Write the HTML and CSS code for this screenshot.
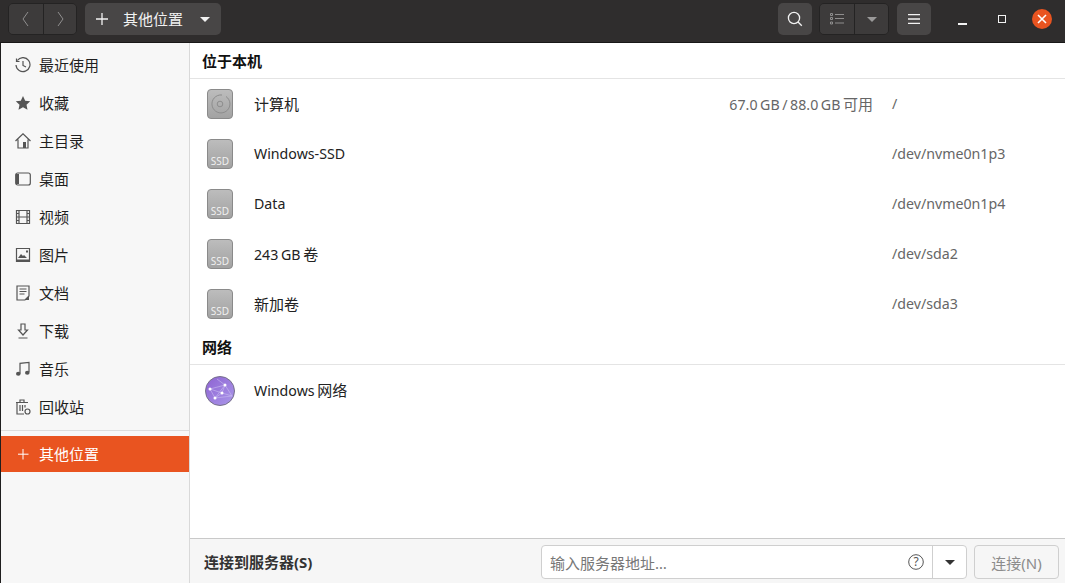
FILE: index.html
```html
<!DOCTYPE html>
<html lang="zh-CN">
<head>
	<meta charset="UTF-8">
	<title>其他位置</title>
	<link rel="stylesheet" href="styles.css">
</head>
<body>
	<header class="topbar">
		<div class="btn-group nav-group">
			<button class="tool-btn nav-btn"><svg width="12" height="18" viewBox="0 0 12 18"><path d="M8 2 3 9l5 7" class="dim-line"/></svg></button>
			<button class="tool-btn nav-btn"><svg width="12" height="18" viewBox="0 0 12 18"><path d="M4 2l5 7-5 7" class="dim-line"/></svg></button>
		</div>
		<button class="path-btn">
			<svg width="12" height="12" viewBox="0 0 12 12"><path d="M6 0v12M0 6h12" class="light-line"/></svg>
			<span class="path-label">其他位置</span>
			<span class="caret caret-light"></span>
		</button>
		<div class="spacer"></div>
		<button class="solo-btn search-btn"><svg width="16" height="16" viewBox="0 0 16 16"><circle cx="7" cy="7" r="5.6" class="light-line"/><path d="M11 11l3.8 3.8" class="light-line"/></svg></button>
		<div class="btn-group view-group">
			<button class="tool-btn view-btn"><svg width="14" height="12" viewBox="0 0 14 12"><path d="M.5.5h2v2h-2zM.5 4.5h2v2h-2zM.5 9h2v2h-2zM5 1.5h9M5 5.5h9M5 10h9" class="dim-line"/></svg></button>
			<button class="tool-btn view-btn"><span class="caret caret-dim"></span></button>
		</div>
		<button class="solo-btn menu-btn"><svg width="12" height="10" viewBox="0 0 12 10"><path d="M0 .5h12M0 5h12M0 9.500h12" class="light-line"/></svg></button>
		<div class="win-controls">
			<span class="win-btn"><i class="win-min"></i></span>
			<span class="win-btn"><i class="win-max"></i></span>
			<span class="win-btn win-close"><svg width="10" height="10" viewBox="0 0 10 10"><path d="M1 1l8 8M9 1 1 9" stroke="#fff" stroke-width="1.6"/></svg></span>
		</div>
	</header>

	<div class="content">
		<nav class="sidebar">
			<ul class="places">
				<li class="place"><svg class="place-icon" viewBox="0 0 16 16"><path d="M2.300 3.500A7 7 0 1 1 1 8M1.500 1.500v3h3M8 4v4.500l3 1.500" class="icon-line"/></svg><span class="place-label">最近使用</span></li>
				<li class="place"><svg class="place-icon" viewBox="0 0 16 16"><path d="M8 1l2.200 4.700 5 .6-3.700 3.400 1 5L8 12.200 3.500 14.700l1-5L.8 6.300l5-.6z" class="icon-fill"/></svg><span class="place-label">收藏</span></li>
				<li class="place"><svg class="place-icon" viewBox="0 0 16 16"><path d="M.5 8 8 .8 15.500 8M3 6.500v8.500h10V6.500" class="icon-line"/><path d="M8 9h3v6H8z" class="icon-fill"/></svg><span class="place-label">主目录</span></li>
				<li class="place"><svg class="place-icon" viewBox="0 0 16 16"><rect x=".7" y="2" width="14.600" height="12" rx="2" class="icon-line"/><path d="M1 3h3v10H1z" class="icon-fill"/></svg><span class="place-label">桌面</span></li>
				<li class="place"><svg class="place-icon" viewBox="0 0 16 16"><path d="M1.500 1.500h13v13h-13zM4 1.500v13M12 1.500v13M4 8h8M1.500 4.500H4M1.500 8H4M1.500 11.500H4M12 4.500h2.500M12 8h2.500M12 11.500h2.500" class="icon-line"/></svg><span class="place-label">视频</span></li>
				<li class="place"><svg class="place-icon" viewBox="0 0 16 16"><path d="M1.500 1.500h13v13h-13z" class="icon-line"/><path d="M3 11l3-4 2 2 1-1 3 3zM11 3.500h2v2h-2zM1 12.500h14V15H1z" class="icon-fill"/></svg><span class="place-label">图片</span></li>
				<li class="place"><svg class="place-icon" viewBox="0 0 16 16"><path d="M2 1h12v10l-4 4H2zM4.500 4h7M4.500 6.500h7M4.500 9h5" class="icon-line"/><path d="M14 11v4h-4z" class="icon-fill"/></svg><span class="place-label">文档</span></li>
				<li class="place"><svg class="place-icon" viewBox="0 0 16 16"><path d="M6 1h4v6h2.500L8 12 3.500 7H6zM3.500 15h9" class="icon-line"/></svg><span class="place-label">下载</span></li>
				<li class="place"><svg class="place-icon" viewBox="0 0 16 16"><path d="M5 12.500V2.300l9-1V11" class="icon-line" stroke-width="1.600"/><ellipse cx="3.300" cy="12.800" rx="2.300" ry="2" class="icon-fill"/><ellipse cx="12.300" cy="11.800" rx="2.300" ry="2" class="icon-fill"/></svg><span class="place-label">音乐</span></li>
				<li class="place"><svg class="place-icon" viewBox="0 0 16 16"><path d="M1 3.500h12M5 3V1h4v2M2 3.500V15h7M5 6v6M7.500 6v6M10 6v2.500" class="icon-line"/><circle cx="12.500" cy="12.500" r="2.500" class="icon-line"/></svg><span class="place-label">回收站</span></li>
			</ul>
			<div class="places-sep"></div>
			<div class="place place-active"><svg class="place-icon" viewBox="0 0 16 16"><path d="M8 3v10.500M3 8.200h10.500" stroke="#fff" fill="none"/></svg><span class="place-label">其他位置</span></div>
		</nav>

		<main class="main">
			<div class="list">
				<h2 class="section-title">位于本机</h2>
				<div class="row">
					<svg class="drive" viewBox="0 0 26 30"><use href="#drive-body"/><path d="M19 7.500A9 9 0 1 1 15 6" fill="none" stroke="#8d8d8d"/><circle cx="13" cy="15" r="2.800" fill="none" stroke="#8d8d8d"/></svg>
					<span class="row-name">计算机</span>
					<span class="row-usage"><span class="latin">67.0 GB / 88.0 GB </span>可用</span>
					<span class="row-path latin">/</span>
				</div>
				<div class="row">
					<svg class="drive" viewBox="0 0 26 30"><use href="#drive-body"/><text x="13" y="26" class="drive-text">SSD</text></svg>
					<span class="row-name latin">Windows-SSD</span>
					<span class="row-path latin">/dev/nvme0n1p3</span>
				</div>
				<div class="row">
					<svg class="drive" viewBox="0 0 26 30"><use href="#drive-body"/><text x="13" y="26" class="drive-text">SSD</text></svg>
					<span class="row-name latin">Data</span>
					<span class="row-path latin">/dev/nvme0n1p4</span>
				</div>
				<div class="row">
					<svg class="drive" viewBox="0 0 26 30"><use href="#drive-body"/><text x="13" y="26" class="drive-text">SSD</text></svg>
					<span class="row-name"><span class="latin">243 GB </span>卷</span>
					<span class="row-path latin">/dev/sda2</span>
				</div>
				<div class="row">
					<svg class="drive" viewBox="0 0 26 30"><use href="#drive-body"/><text x="13" y="26" class="drive-text">SSD</text></svg>
					<span class="row-name">新加卷</span>
					<span class="row-path latin">/dev/sda3</span>
				</div>
				<h2 class="section-title section-net">网络</h2>
				<div class="row row-net">
					<svg class="globe" viewBox="0 0 30 30">
						<circle cx="15" cy="15" r="14.500" fill="url(#globe-fill)" stroke="#77718a"/>
						<path d="M20 9 5 13l5 9 10-13 7 11-17 2M5 13l12 4 10 3M20 9l-3 8-7 5M12 3l8 6" fill="none" stroke="#c9bcf0" stroke-width=".6"/>
						<circle cx="20" cy="9" r="1.500" fill="#fff"/><circle cx="5" cy="13" r="1.500" fill="#fff"/><circle cx="17" cy="17" r="1.500" fill="#fff"/><circle cx="10" cy="22" r="1.500" fill="#fff"/>
					</svg>
					<span class="row-name"><span class="latin">Windows </span>网络</span>
				</div>
			</div>
			<footer class="connect-bar">
				<span class="connect-label">连接到服务器(S)</span>
				<div class="address">
					<span class="address-input">输入服务器地址…</span>
					<svg class="help-icon" width="16" height="16" viewBox="0 0 16 16"><circle cx="8" cy="8" r="7.300" fill="none" stroke="#555"/><text x="8" y="12" class="help-text">?</text></svg>
					<span class="address-drop"><span class="caret caret-dark"></span></span>
				</div>
				<button class="connect-btn">连接(N)</button>
			</footer>
		</main>
	</div>

	<svg class="defs" width="0" height="0">
		<defs>
			<linearGradient id="drive-fill" x1="0" y1="0" x2="0" y2="1"><stop offset="0" stop-color="#bdbdbd"/><stop offset="1" stop-color="#a2a2a2"/></linearGradient>
			<linearGradient id="globe-fill" x1="0" y1="0" x2="1" y2="1"><stop offset="0" stop-color="#8d62d2"/><stop offset="1" stop-color="#ab98ea"/></linearGradient>
			<rect id="drive-body" x=".5" y=".5" width="25" height="29" rx="3.500" fill="url(#drive-fill)" stroke="#8a8a8a"/>
		</defs>
	</svg>
</body>
</html>
```

FILE: styles.css
```css
*{box-sizing: border-box; padding: 0; margin: 0;}
html,body{height: 100%;}
body{
	display: flex;
	flex-direction: column;
	overflow: hidden;
	font-family: "Noto Sans", "Noto Sans CJK SC", sans-serif;
	font-size: 15px;
	color: #1a1a1a;
	background: #fff;
}
button{font: inherit; border: 0; display: flex; align-items: center; justify-content: center;}
svg{flex: none;}
.defs{position: absolute;}
.latin{font-size: 14.200px;}

/* barra superior */
.topbar{
	height: 43px;
	flex: none;
	display: flex;
	align-items: flex-start;
	padding: 3px 0 0 8px;
	background: #2f2d2d;
	border-bottom: 1px solid #191818;
}
.spacer{flex: 1;}
.btn-group{
	display: flex;
	height: 32px;
	border: 1px solid #242323;
	border-radius: 5px;
	overflow: hidden;
}
.tool-btn{height: 100%; background: #3d3b3b;}
.nav-group{width: 69px;}
.nav-btn{width: 50%;}
.nav-btn + .nav-btn{border-left: 1px solid #242323;}
.path-btn{
	width: 136px;
	height: 32px;
	margin-left: 8px;
	justify-content: flex-start;
	padding-left: 11px;
	background: #484646;
	border-radius: 5px;
	color: #f2f2f2;
}
.path-label{margin-left: 15px; margin-bottom: 2px;}
.path-btn .caret{margin-left: 17px;}
.solo-btn{width: 34px; height: 32px; background: #484646; border-radius: 5px;}
.view-group{width: 70px; margin: 0 8px 0 7px;}
.view-btn{width: 50%;}
.view-btn + .view-btn{border-left: 1px solid #242323;}
.win-controls{display: flex; width: 134px; height: 32px; padding: 0 3px 0 11px;}
.win-btn{flex: 1; display: flex; align-items: center; justify-content: center;}
.win-min{width: 9px; height: 2px; margin-top: 10px; background: #f2f2f2;}
.win-max{width: 8px; height: 8px; border: 1.500px solid #f2f2f2;}
.win-close{flex: none; width: 20px; height: 20px; margin: 6px 10px 0 10px; background: #e95420; border-radius: 50%;}
.caret{display: block; width: 0; height: 0; border-style: solid; border-width: 5px 5.500px 0; border-color: transparent;}
.caret-light{border-top-color: #f2f2f2;}
.caret-dim{border-top-color: #9a9999;}
.caret-dark{border-top-color: #333;}
.light-line{fill: none; stroke: #f2f2f2; stroke-width: 1.300;}
.dim-line{fill: none; stroke: #8f8e8e; stroke-width: 1;}

/* cuerpo */
.content{flex: 1; display: flex; min-height: 0;}
.sidebar{
	width: 190px;
	flex: none;
	padding-top: 3px;
	background: #f7f7f7;
	border-left: 1px solid #1f1e1e;
	border-right: 1px solid #d9d9d9;
}
.places{list-style: none;}
.place{display: flex; align-items: center; height: 38px; padding-left: 14px; color: #1f1f1f;}
.place-icon{width: 16px; height: 16px; margin-right: 8px;}
.place-label{margin-bottom: 2px;}
.icon-line{fill: none; stroke: #555; stroke-width: 1.200;}
.icon-fill{fill: #555;}
.places-sep{height: 1px; margin: 4px 0 5px; background: #dcdcdc;}
.place-active{height: 36px; background: #e95420; color: #fff;}

.main{flex: 1; display: flex; flex-direction: column; min-width: 0;}
.list{flex: 1; min-height: 0;}
.section-title{
	height: 36px;
	line-height: 36px;
	padding-left: 12px;
	font-size: 15px;
	font-weight: 700;
	color: #111;
	border-bottom: 1px solid #e4e4e4;
}
.section-net{height: 35px; margin-top: 1px; line-height: 35px;}
.row{display: flex; align-items: center; height: 50px; padding-left: 17px;}
.row-net{height: 52px;}
.drive{width: 26px; height: 30px;}
.drive-text{font-size: 10px; fill: #f0f0f0; text-anchor: middle; font-family: "Noto Sans", sans-serif;}
.globe{width: 30px; height: 30px; margin-left: -2px;}
.row-name{margin-left: 21px; margin-bottom: 2px; flex: 1; color: #222; word-spacing: -1px;}
.row-net .row-name{margin-left: 19px; margin-bottom: 4px;}
.row-usage{margin-right: 19px; margin-bottom: 2px; color: #666; word-spacing: -1.100px;}
.row-path{width: 173px; margin-bottom: 2px; color: #666;}

/* barra inferior */
.connect-bar{
	height: 45px;
	flex: none;
	display: flex;
	align-items: center;
	padding: 0 6px 0 14px;
	background: #f6f6f6;
	border-top: 1px solid #c9c9c9;
}
.connect-label{width: 337px; font-weight: 700; color: #333;}
.address{
	display: flex;
	align-items: center;
	width: 426px;
	height: 34px;
	margin-top: 2px;
	padding-left: 8px;
	background: #fff;
	border: 1px solid #cfcfcf;
	border-radius: 4px;
}
.address-input{flex: 1; color: #777;}
.help-icon{margin-right: 8px;}
.help-text{font-size: 12px; fill: #555; text-anchor: middle;}
.address-drop{display: flex; align-items: center; justify-content: center; width: 34px; height: 100%; border-left: 1px solid #cfcfcf;}
.connect-btn{
	width: 85px;
	height: 34px;
	margin-top: 2px;
	margin-left: 7px;
	color: #8c8c8c;
	background: #f6f6f6;
	border: 1px solid #cfcfcf;
	border-radius: 4px;
}
```
